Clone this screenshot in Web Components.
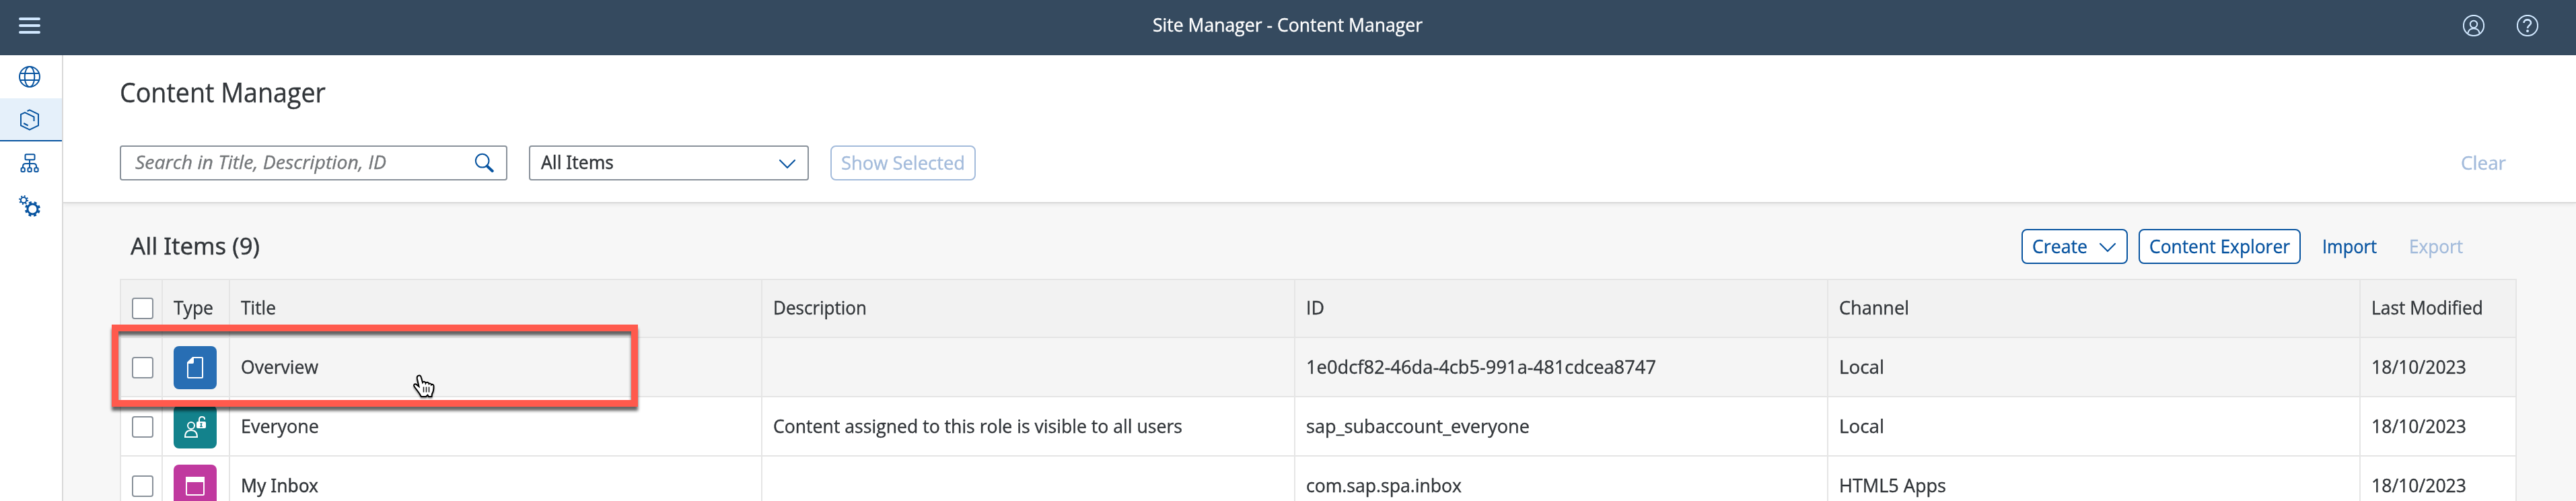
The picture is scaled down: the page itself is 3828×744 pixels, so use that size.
<!DOCTYPE html><html lang="en"><head><meta charset="utf-8"><title>Content Manager</title>
<style>html,body{margin:0;height:744px;overflow:hidden}body{font:28px/36px "Open Sans","Noto Sans",sans-serif;color:#32363a;background:#f7f7f7}</style></head><body>
<cm-shell></cm-shell>
<script>
const define=(name,html,init)=>customElements.define(name,class extends HTMLElement{
 constructor(){super();const r=this.attachShadow({mode:'open'});const t=document.createElement('template');t.innerHTML=html;r.append(t.content.cloneNode(true))}
 connectedCallback(){if(init)init.call(this,this.shadowRoot)}});

define('cm-text','<style>:host{display:block;white-space:pre;flex:none;-webkit-text-stroke:.4px currentColor}:host([serif-i]){font-family:"Noto Sans",sans-serif}span{display:inline-block;transform-origin:0 50%}</style><span><slot></slot></span>',function(r){
 const s=r.querySelector('span'),w=+this.getAttribute('w');this.style.width=w+'px';s.style.transform='scaleX('+(w/s.getBoundingClientRect().width)+')'});

const paths={
menu:'<path d="M2 6h28M2 16h28M2 26h28" stroke-width="4" stroke-linecap="round"/>',
user:'<circle cx="16" cy="16" r="15.1"/><circle cx="16" cy="14" r="5.2"/><path d="M7.3 27.5c1-5 4-7.2 8.7-7.2s7.700 2.200 8.700 7.200"/>',
help:'<circle cx="16" cy="16" r="15.100"/><path d="M10.500 12C10.500 5.800 21 5.800 21 12c0 4-5 3.500-5 8" stroke-width="2.600"/><circle cx="16" cy="24" r="2" fill="currentColor" stroke="none"/>',
globe:'<circle cx="16" cy="16" r="15"/><ellipse cx="16" cy="16" rx="7.300" ry="15"/><path d="M2 11h28M2 21h28"/>',
box:'<path d="M12.500 3 16 1.400 29 7.600V24.400L16 30.600 3 24.400V7.800L9 5l13.500 6.600V18M7.200 21l6.500 3.500"/>',
org:'<rect x="9.500" y="1.300" width="14" height="8" rx="1.500"/><path d="M16 9.300v11.500M6 21v-2q0-4 4-4h12q4 0 4 4v2"/><rect x="3.500" y="21.300" width="5.300" height="5.700" rx="1.500"/><rect x="13.400" y="21.300" width="5.300" height="5.700" rx="1.500"/><rect x="23.300" y="21.300" width="5.300" height="5.700" rx="1.500"/>',
gears:'<circle cx="7.100" cy="7.100" r="4.200"/><circle cx="7.100" cy="7.100" r="5.900" stroke-width="2.400" stroke-dasharray="1.900 2.734"/><circle cx="20.400" cy="20.400" r="7.500" stroke-width="3"/><circle cx="20.400" cy="20.400" r="10" stroke-width="3" stroke-dasharray="4 3.854" stroke-dashoffset="-2"/>',
search:'<ellipse cx="12.700" cy="13.700" rx="9.800" ry="9.900"/><path d="m19.700 21.500 8 7.500" stroke-width="4" stroke-linecap="round"/>',
down:'<path d="M7 13 18 24 29 13" stroke-width="2.200" stroke-linecap="round"/>',
page:'<path d="M12.500 1H26q1 0 1 1v28q0 1-1 1H6q-1 0-1-1V8.500z"/><path d="M12 1 5 8v2h7q2 0 2-2V1z" fill="currentColor" stroke="none"/>',
role:'<circle cx="10" cy="14" r="5"/><path d="M1 31c0-7 3-10 9-10s9 3 9 10z"/><path d="M22 9V5.500q0-4.500 4-4.500 4 0 4 3v1"/><rect x="18" y="8" width="14" height="10" rx="2" fill="currentColor" stroke="none"/><path d="M25 10.500v5M23.500 11h3M23 15.500h4" stroke="#13828c" stroke-width="1.700"/>',
app:'<rect x="3" y="3" width="26" height="26" rx="1.500"/><path d="M3 3h26v6H3z" fill="currentColor"/>'};
define('cm-icon','<style>:host{display:block;width:32px;height:32px;flex:none}svg{display:block;width:100%;height:100%;fill:none;stroke:currentColor;stroke-width:2}</style><svg viewBox="0 0 32 32"></svg>',function(r){r.querySelector('svg').innerHTML=paths[this.getAttribute('name')]});

define('cm-header',`<style>:host{display:flex;box-sizing:border-box;height:82px;background:#354a5f;color:#d1e8ff;align-items:center;padding:0 56px 6px 28px}cm-text{color:#fff;margin:-4px auto 0 1653px}.i{display:flex;gap:48px}</style>
<cm-icon name="menu"></cm-icon><cm-text w="401" style="font-weight:500">Site Manager - Content Manager</cm-text><div class="i"><cm-icon name="user"></cm-icon><cm-icon name="help"></cm-icon></div>`);

define('cm-rail',`<style>:host{display:block;width:92px;border-right:2px solid #d9d9d9;background:#fff;color:#0854a0}div{height:64px;box-sizing:border-box;padding:16px 28px}.on{background:#e5f0fa;border-bottom:2px solid #0854a0}</style>
<div><cm-icon name="globe"></cm-icon></div><div class="on"><cm-icon name="box"></cm-icon></div><div style="padding-top:18px"><cm-icon name="org"></cm-icon></div><div><cm-icon name="gears"></cm-icon></div>`);

define('cm-button',`<style>:host{display:flex;box-sizing:border-box;height:52px;border:2px solid transparent;border-radius:8px;align-items:center;padding:0 14px 3px;color:#0854a0;flex:none}:host([framed]){background:#fff;border-color:currentColor}:host([disabled]){color:#a3bbdb}</style><slot></slot>`);

define('cm-filter',`<style>:host{display:block;box-sizing:border-box;height:220px;background:#fff;border-bottom:2px solid #d9d9d9;padding:33px 88px 0 84px;box-shadow:0 2px 6px #0001}.title{font-size:40px;line-height:44px}
.bar{display:flex;margin-top:57px;align-items:center}.f{height:52px;box-sizing:border-box;border:2px solid #89919a;border-radius:4px;display:flex;align-items:center;justify-content:space-between;color:#32363a;padding:0 16px 2px;background:#fff}.f cm-text{margin-top:-2px}.s{width:576px;padding-left:21px}.s cm-text{font-style:italic;color:#74777a}.d{width:416px;margin:0 32px}cm-icon{color:#0854a0}</style>
<cm-text class="title" w="306">Content Manager</cm-text><div class="bar"><div class="f s"><cm-text w="373">Search in Title, Description, ID</cm-text><cm-icon name="search"></cm-icon></div><div class="f d"><cm-text w="108" serif-i>All Items</cm-text><cm-icon name="down"></cm-icon></div><cm-button framed disabled><cm-text w="184">Show Selected</cm-text></cm-button><cm-button disabled style="margin-left:auto"><cm-text w="67">Clear</cm-text></cm-button></div>`);

define('cm-toolbar',`<style>:host{display:flex;height:112px;box-sizing:border-box;padding:16px 64px 0 16px;align-items:center}.t{font-size:35px;line-height:44px;margin:-3px auto 0 0}cm-button+cm-button{margin-left:16px}</style>
<cm-text class="t" w="192" serif-i>All Items (9)</cm-text><cm-button framed><cm-text w="82">Create</cm-text><cm-icon name="down" style="margin-left:12px"></cm-icon></cm-button><cm-button framed><cm-text w="209">Content Explorer</cm-text></cm-button><cm-button><cm-text w="81">Import</cm-text></cm-button><cm-button disabled><cm-text w="80">Export</cm-text></cm-button>`);

define('cm-check','<style>:host{display:block;width:32px;height:32px;box-sizing:border-box;border:2px solid #89919a;border-radius:4px;background:#fff}</style>');
define('cm-tile','<style>:host{display:flex;width:64px;height:64px;border-radius:8px;color:#fff;align-items:center;justify-content:center}</style><slot></slot>');
define('cm-row',`<style>:host{display:grid;grid-template-columns:62px 100px 791px 792px 792px 791px 232px;height:88px;box-sizing:border-box;border-bottom:2px solid #e5e5e5;background:#fff}:host([head]){height:86px;background:#f2f2f2}:host([hover]){background:#f5f5f5}
::slotted(*){box-sizing:border-box;border-right:2px solid #e5e5e5;display:flex;align-items:center;padding:2px 0 0 16px;min-width:0}:host([head]) ::slotted(*){padding-top:0}</style><slot></slot>`);

define('cm-table',`<style>:host{display:block;border:2px solid #e5e5e5;border-right:0;width:3560px;height:330px}cm-text{margin-top:-4px}</style>
<cm-row head><div><cm-check></cm-check></div><div><cm-text w="59">Type</cm-text></div><div><cm-text w="52">Title</cm-text></div><div><cm-text w="139">Description</cm-text></div><div><cm-text w="27">ID</cm-text></div><div><cm-text w="104">Channel</cm-text></div><div><cm-text w="166">Last Modified</cm-text></div></cm-row>
<cm-row hover><div><cm-check></cm-check></div><div><cm-tile style="background:#286eb4"><cm-icon name="page"></cm-icon></cm-tile></div><div><cm-text w="115">Overview</cm-text></div><div></div><div><cm-text w="520">1e0dcf82-46da-4cb5-991a-481cdcea8747</cm-text></div><div><cm-text w="67">Local</cm-text></div><div><cm-text w="141">18/10/2023</cm-text></div></cm-row>
<cm-row><div><cm-check></cm-check></div><div><cm-tile style="background:#13828c"><cm-icon name="role"></cm-icon></cm-tile></div><div><cm-text w="116">Everyone</cm-text></div><div><cm-text w="608">Content assigned to this role is visible to all users</cm-text></div><div><cm-text w="332">sap_subaccount_everyone</cm-text></div><div><cm-text w="67">Local</cm-text></div><div><cm-text w="141">18/10/2023</cm-text></div></cm-row>
<cm-row><div><cm-check></cm-check></div><div><cm-tile style="background:#c0399f"><cm-icon name="app"></cm-icon></cm-tile></div><div><cm-text w="115" serif-i>My Inbox</cm-text></div><div></div><div><cm-text w="231">com.sap.spa.inbox</cm-text></div><div><cm-text w="159">HTML5 Apps</cm-text></div><div><cm-text w="141">18/10/2023</cm-text></div></cm-row>`);

/* Callout frame and pointer, floating over the table. */
define('cm-callout',`<style>:host{position:absolute;left:166px;top:482px;width:782px;height:122px;box-sizing:border-box;border:10px solid #ff5a4d;filter:drop-shadow(0 6px 2px #0009)}</style>`);
define('cm-pointer',`<style>:host{position:absolute;left:613px;top:555px;width:34px;height:38px}svg{display:block;filter:drop-shadow(0 2px 1px #0006)}</style><svg width="34" height="38" viewBox="0 0 34 38"><path d="M8.500 3C11 1.500 12.500 3.500 13 6l2 7c1-2 4-1.500 4.500 1 1-2 4.500-1.500 5 1 1-1 3.500-.5 3.500 1.500 2-1.500 3.700 0 3.500 2.500 0 6-.5 8-2.500 11l-.5 4h-4.500l-1.500-2.500-2.500 2.500h-7L10 29C7 25 5 22 3 19.500 1 17 2.500 14.500 5 15.500L9.500 19 7 8C6.500 5.500 7 3.500 8.500 3z" fill="#fff" stroke="#000" stroke-width="2"/><path d="M16.500 19.500v8M20.500 19.500v8M24.500 19.500v8" stroke="#222" stroke-width="1.600"/></svg>`);

define('cm-shell',`<style>:host{display:block;height:744px;overflow:hidden;position:relative}.b{display:flex;height:662px}main{flex:1;min-width:0;overflow:hidden}.c{padding:0 88px 0 84px}</style><cm-header></cm-header><div class="b"><cm-rail></cm-rail><main><cm-filter></cm-filter><div class="c"><cm-toolbar></cm-toolbar><cm-table></cm-table></div></main></div><cm-callout></cm-callout><cm-pointer></cm-pointer>`);
</script></body></html>
